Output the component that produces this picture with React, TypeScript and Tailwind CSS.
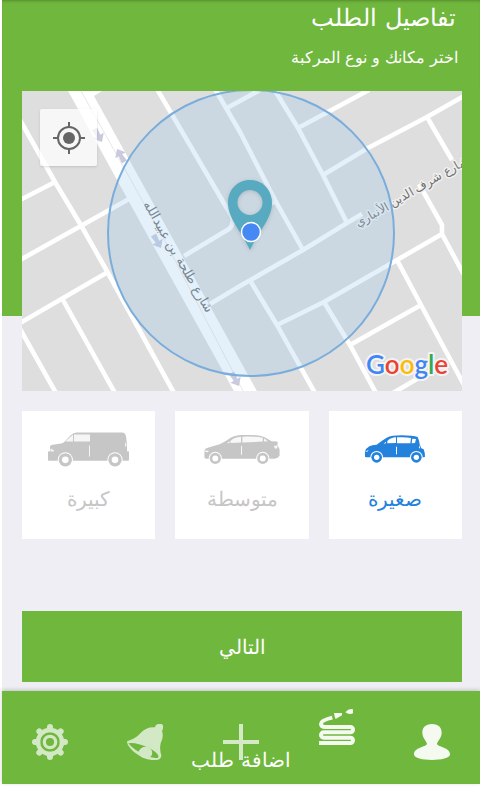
import { useState, type ReactNode } from "react";

function MapDrawing() {
  return (
    <svg viewBox="22 91 440 300" preserveAspectRatio="xMidYMid slice" className="block h-[300px] w-full" role="img" aria-label="خريطة">
      <rect x="-200" y="91" width="900" height="300" fill="#dedede" />
      <g fill="none" stroke="#fff" strokeWidth="4.6" strokeLinejoin="round">
        <path d="M20 120 L55 182 L82 227 L108 273 L174 393" />
        <path d="M20 200 L55 182 M20 260 L129 199 M20 323 L108 272 M63 300 L115 393 M20 329 L56 393" />
        <path d="M157 89 L232 217 Q234 225 229 229 L184 256" />
        <path d="M215 89 L240 132 L275 200 L303 250 M227 108 L260 90 M270 204 L277 201" />
        <path d="M274 89 L298 128 L323 175 L347 223 M298 128 L369 90 M323 175 L368 148 L427 117 L464 96 M427 117 L452 160" />
        <path d="M210 304 L240 286 L303 250 L347 223 L362 214" />
        <path d="M419 184 L442 225 V234 L464 275 M442 234 L397 260 L324 302 L277 325" />
        <path d="M251 282 L277 325 L315 393 M324 302 L350 345 L376 393 M350 345 L421 305 M397 260 L421 305 L464 385 M393 393 L422 376" />
      </g>
      <path d="M67 89 H105 L94 96 L258 393 H235 L149 238 Z" fill="#fff" />
      <path d="M81 91 L165 241 L243 391" fill="none" stroke="#dedede" strokeWidth="0.7" />
      <g fill="#c9cadd">
        <path d="M-3 -7 L3 -7 L2 1 L6 1 L0 8 L-6 1 L-2 1 Z" transform="translate(98 135) rotate(-30)" />
        <path d="M-3 -7 L3 -7 L2 1 L6 1 L0 8 L-6 1 L-2 1 Z" transform="translate(121 156) rotate(150)" />
        <path d="M-3 -7 L3 -7 L2 1 L6 1 L0 8 L-6 1 L-2 1 Z" transform="translate(157 241) rotate(-30)" />
        <path d="M-3 -7 L3 -7 L2 1 L6 1 L0 8 L-6 1 L-2 1 Z" transform="translate(235 379) rotate(-30)" />
      </g>
      <g fill="#6f6f6f" stroke="#f0f0f0" strokeWidth="3" strokeLinejoin="round" style={{ paintOrder: "stroke" }} direction="rtl" fontFamily="'DejaVu Sans', sans-serif">
        <text transform="translate(175 259) rotate(60)" textAnchor="middle" fontSize="13" strokeOpacity="0">شارع طلحة بن عبيدالله</text>
        <text transform="translate(358 227) rotate(-30)" textAnchor="end" fontSize="12">شارع شرف الدين الأنباري</text>
      </g>
      <circle cx="251" cy="233" r="143" fill="#97c9ee" fillOpacity="0.26" stroke="#7aaddb" strokeWidth="2" />
      <path d="M250 180 C237 180 228 190 228 203 C228 219 242 232 250 250 C258 232 272 219 272 203 C272 190 263 180 250 180 Z M250 190 A12.5 12.5 0 1 1 250 215 A12.5 12.5 0 1 1 250 190 Z" fill="#57aabf" fillRule="evenodd" className="drop-shadow-sm" />
      <circle cx="251" cy="232" r="9.5" fill="#4688f4" stroke="#fff" strokeWidth="1.5" />
      <text x="366" y="374" fontFamily="Lato, sans-serif" fontSize="26" fontWeight="600" stroke="#f4f4f4" strokeWidth="4" strokeLinejoin="round" style={{ paintOrder: "stroke" }} direction="ltr">
        <tspan fill="#4285f4">G</tspan><tspan fill="#ea4335">o</tspan><tspan fill="#fbbc05">o</tspan><tspan fill="#4285f4">g</tspan><tspan fill="#34a853">l</tspan><tspan fill="#ea4335">e</tspan>
      </text>
    </svg>
  );
}

function Wheel({ x, y, r, hub }: { x: number; y: number; r: number; hub: number }) {
  return (
    <>
      <circle cx={x} cy={y} r={r + 3} fill="#fff" />
      <circle cx={x} cy={y} r={r} fill="currentColor" />
      <circle cx={x} cy={y} r={hub} fill="#fff" />
    </>
  );
}

const SmallCar = (
  <svg viewBox="375 107 180 84" className="h-7 w-[60px]" aria-hidden="true">
    <path fill="currentColor" d="M375 172 V158 Q378 146 388 141 Q396 136 410 136 Q425 124 440 115 Q455 108 485 108 Q520 108 533 113 Q538 124 539 135 L544 147 L551 150 Q555 160 555 172 Q553 174 548 174 H378 Z" />
    <g fill="#fff">
      <path d="M431 133 L438 127 V132 Z M442 125 Q453 114 468 114 V131 L442 132 Z M471 114 Q500 113 513 116 L511 132 H471 Z M517 118 L528 119 L525 131 L515 132 Z" />
      <path d="M468 142 H471 V165 H468 Z M376 157 L386 151 L382 157 Z M537 137 L541 147 H537 Z" />
    </g>
    <Wheel x={410} y={174} r={16} hub={8} />
    <Wheel x={529} y={174} r={16} hub={8} />
  </svg>
);

const Sedan = (
  <svg viewBox="582 105 228 88" className="h-[29px] w-[76px]" aria-hidden="true">
    <path fill="currentColor" d="M582 173 V152 Q583 146 592 144 L628 133 Q640 128 655 118 Q670 106 692 105 H720 Q750 105 765 112 L786 124 L803 125 Q806 130 803 134 L810 148 V168 Q806 175 795 177 H590 Q582 177 582 173 Z" />
    <g fill="#f8f8f8">
      <path d="M650 130 L658 124 V129 Z M661 123 Q672 111 693 110 V128 L661 129 Z M697 110 Q740 109 759 113 V125 L697 128 Z M763 115 L774 124 L763 125 Z" />
      <path d="M693 138 H696 V165 H693 Z M583 152 L596 153 L592 157 L583 156 Z M793 138 L804 136 L803 145 L796 147 Z" />
    </g>
    <Wheel x={615} y={176} r={17} hub={9} />
    <Wheel x={759} y={176} r={17} hub={9} />
  </svg>
);

const Van = (
  <svg viewBox="114 95 243 104" className="h-[35px] w-[81px]" aria-hidden="true">
    <path fill="currentColor" d="M114 153 L120 152 V138 Q121 134 128 133 L154 129 Q160 128 165 122 L182 104 Q190 96 200 96 H336 Q346 97 348 107 Q352 128 351 152 L357 153 V178 Q357 181 354 181 H116 Q114 181 114 178 Z" />
    <g fill="#f5f5f5">
      <path d="M166 123 L189 102 V123 Z M192 102 H240 V123 H192 Z" />
      <path d="M237 135 H240 V168 H237 Z M122 144 L133 150 L131 153 H121 Z M345 126 Q350 126 349 138 H345 Z" />
    </g>
    <Wheel x={166} y={178} r={20} hub={10} />
    <Wheel x={315} y={178} r={20} hub={10} />
  </svg>
);

const PersonIcon = (
  <svg viewBox="528 372 108 108" className="size-9" fill="#fff" fillOpacity="0.93" aria-hidden="true">
    <path d="M582 372 C602 372 611 384 611 398 C611 414 597 424 597 432 C600 441 636 442 636 463 C636 475 610 480 582 480 C554 480 528 475 528 463 C528 442 564 441 567 432 C567 424 553 414 553 398 C553 384 562 372 582 372 Z" />
  </svg>
);

const HoseIcon = (
  <svg viewBox="240 327 108 108" className="size-9" aria-hidden="true">
    <path d="M280 353 Q246 361 246 371 Q246 381 260 381 H334 A8 8 0 0 1 334 397 H254 A8 8 0 0 0 254 413 H334 A8 8 0 0 1 334 429 H240" fill="none" stroke="#f5faf1" strokeWidth="12" />
    <path d="M285 339 H309 V346 L290 357 L287 350 Z M319 337 Q330 324 342 328 V340 Q330 345 319 337 Z" fill="#f5faf1" />
  </svg>
);

const PlusIcon = (
  <svg viewBox="0 0 36 36" className="size-9" aria-hidden="true">
    <path d="M18 0 V36 M0 18 H36" stroke="#fff" strokeOpacity="0.7" strokeWidth="4" />
  </svg>
);

const BellIcon = (
  <svg viewBox="384 372 108 108" className="size-9" aria-hidden="true">
    <path fill="#d3e8c4" d="M384 424 Q410 416 425 399 Q442 380 468 382 Q470 372 480 372 H488 L492 376 V384 Q492 390 489 393 Q495 410 485 430 Q481 448 487 466 Q487 480 470 480 Q440 483 405 456 Q384 438 384 424 Z" />
    <path fill="#70b73d" d="M388 430 Q400 427 420 433 Q450 441 470 457 Q482 468 477 473 Q462 476 440 466 Q405 451 388 430 Z" />
    <path fill="#d3e8c4" d="M418 456 Q426 438 446 441 Q464 450 459 464 Q454 475 440 475 Q422 474 418 456 Z" />
  </svg>
);

const GearIcon = (
  <svg viewBox="-54 -54 108 108" className="size-9" fill="none" stroke="#d3e8c4" aria-hidden="true">
    <circle r="36" strokeWidth="13" />
    <circle r="17" strokeWidth="10" />
    <g strokeWidth="18" strokeLinecap="round">
      <path d="M0 -38 V-45 M0 38 V45 M-38 0 H-45 M38 0 H45" />
      <path d="M-28 -28 L-32 -32 M28 -28 L32 -32 M-28 28 L-32 32 M28 28 L32 32" />
    </g>
  </svg>
);

const vehicles: { id: string; label: string; icon: ReactNode }[] = [
  { id: "small", label: "صغيرة", icon: SmallCar },
  { id: "medium", label: "متوسطة", icon: Sedan },
  { id: "large", label: "كبيرة", icon: Van },
];

const tabs: { label: string; icon: ReactNode; raised?: boolean }[] = [
  { label: "الحساب", icon: PersonIcon },
  { label: "طلب", icon: HoseIcon, raised: true },
  { label: "اضافة", icon: PlusIcon },
  { label: "التنبيهات", icon: BellIcon },
  { label: "الإعدادات", icon: GearIcon },
];

export default function App() {
  const [vehicle, setVehicle] = useState("small");

  return (
    <div dir="rtl" className="border-b-[3px] border-l-2 border-white bg-[#efeef4] font-['DejaVu_Sans',sans-serif] font-extralight">
      <header className="bg-[#70b73d] px-5 text-white shadow-[inset_0_3px_3px_-2px_rgba(0,0,0,0.25)]">
        <div className="h-[91px] pr-0.5">
          <h1 className="pt-0.5 pr-0.5 text-2xl leading-8">تفاصيل الطلب</h1>
          <p className="pt-2 text-base leading-8">اختر مكانك و نوع المركبة</p>
        </div>
      </header>

      <main>
        <div className="bg-linear-to-b from-[#70b73d] from-75% to-transparent to-75% pr-[18px] pl-5">
          <div className="relative">
            <MapDrawing />
            <button type="button" aria-label="موقعي" className="absolute top-[18px] left-[18px] flex size-[57px] items-center justify-center rounded-xs bg-white/75 shadow">
              <svg viewBox="0 0 32 32" className="size-8" fill="none" stroke="#666" strokeWidth="2" aria-hidden="true">
                <circle cx="16" cy="16" r="11" />
                <circle cx="16" cy="16" r="6" fill="#666" stroke="none" />
                <path d="M16 0 V5 M16 27 V32 M0 16 H5 M27 16 H32" />
              </svg>
            </button>
          </div>
        </div>

        <div className="grid grid-cols-3 gap-5 pt-5 pr-[18px] pl-5">
          {vehicles.map((v) => (
            <button
              key={v.id}
              type="button"
              aria-pressed={vehicle === v.id}
              onClick={() => setVehicle(v.id)}
              className={`flex h-32 flex-col items-center gap-3 bg-white pt-5 text-xl ${vehicle === v.id ? "text-[#2482dc]" : "text-[#c6c6c6]"}`}
            >
              <span className="flex h-9 items-center">{v.icon}</span>
              <span className="leading-10">{v.label}</span>
            </button>
          ))}
        </div>

        <div className="pt-[72px] pr-[18px] pb-[9px] pl-5">
          <button type="button" className="h-[71px] w-full bg-[#70b73d] text-xl text-white">التالي</button>
        </div>
      </main>

      <nav className="relative grid h-[93px] grid-cols-5 bg-[#70b73d] shadow-[0_-1px_4px_rgba(0,0,0,0.2)]">
        {tabs.map((t) => (
          <button key={t.label} type="button" aria-label={t.label} className={`flex justify-center ${t.raised ? "pt-[18px]" : "pt-[33px]"}`}>
            {t.icon}
          </button>
        ))}
        <span className="pointer-events-none absolute inset-x-0 bottom-2 text-center text-xl leading-8 text-white">اضافة طلب</span>
      </nav>
    </div>
  );
}
